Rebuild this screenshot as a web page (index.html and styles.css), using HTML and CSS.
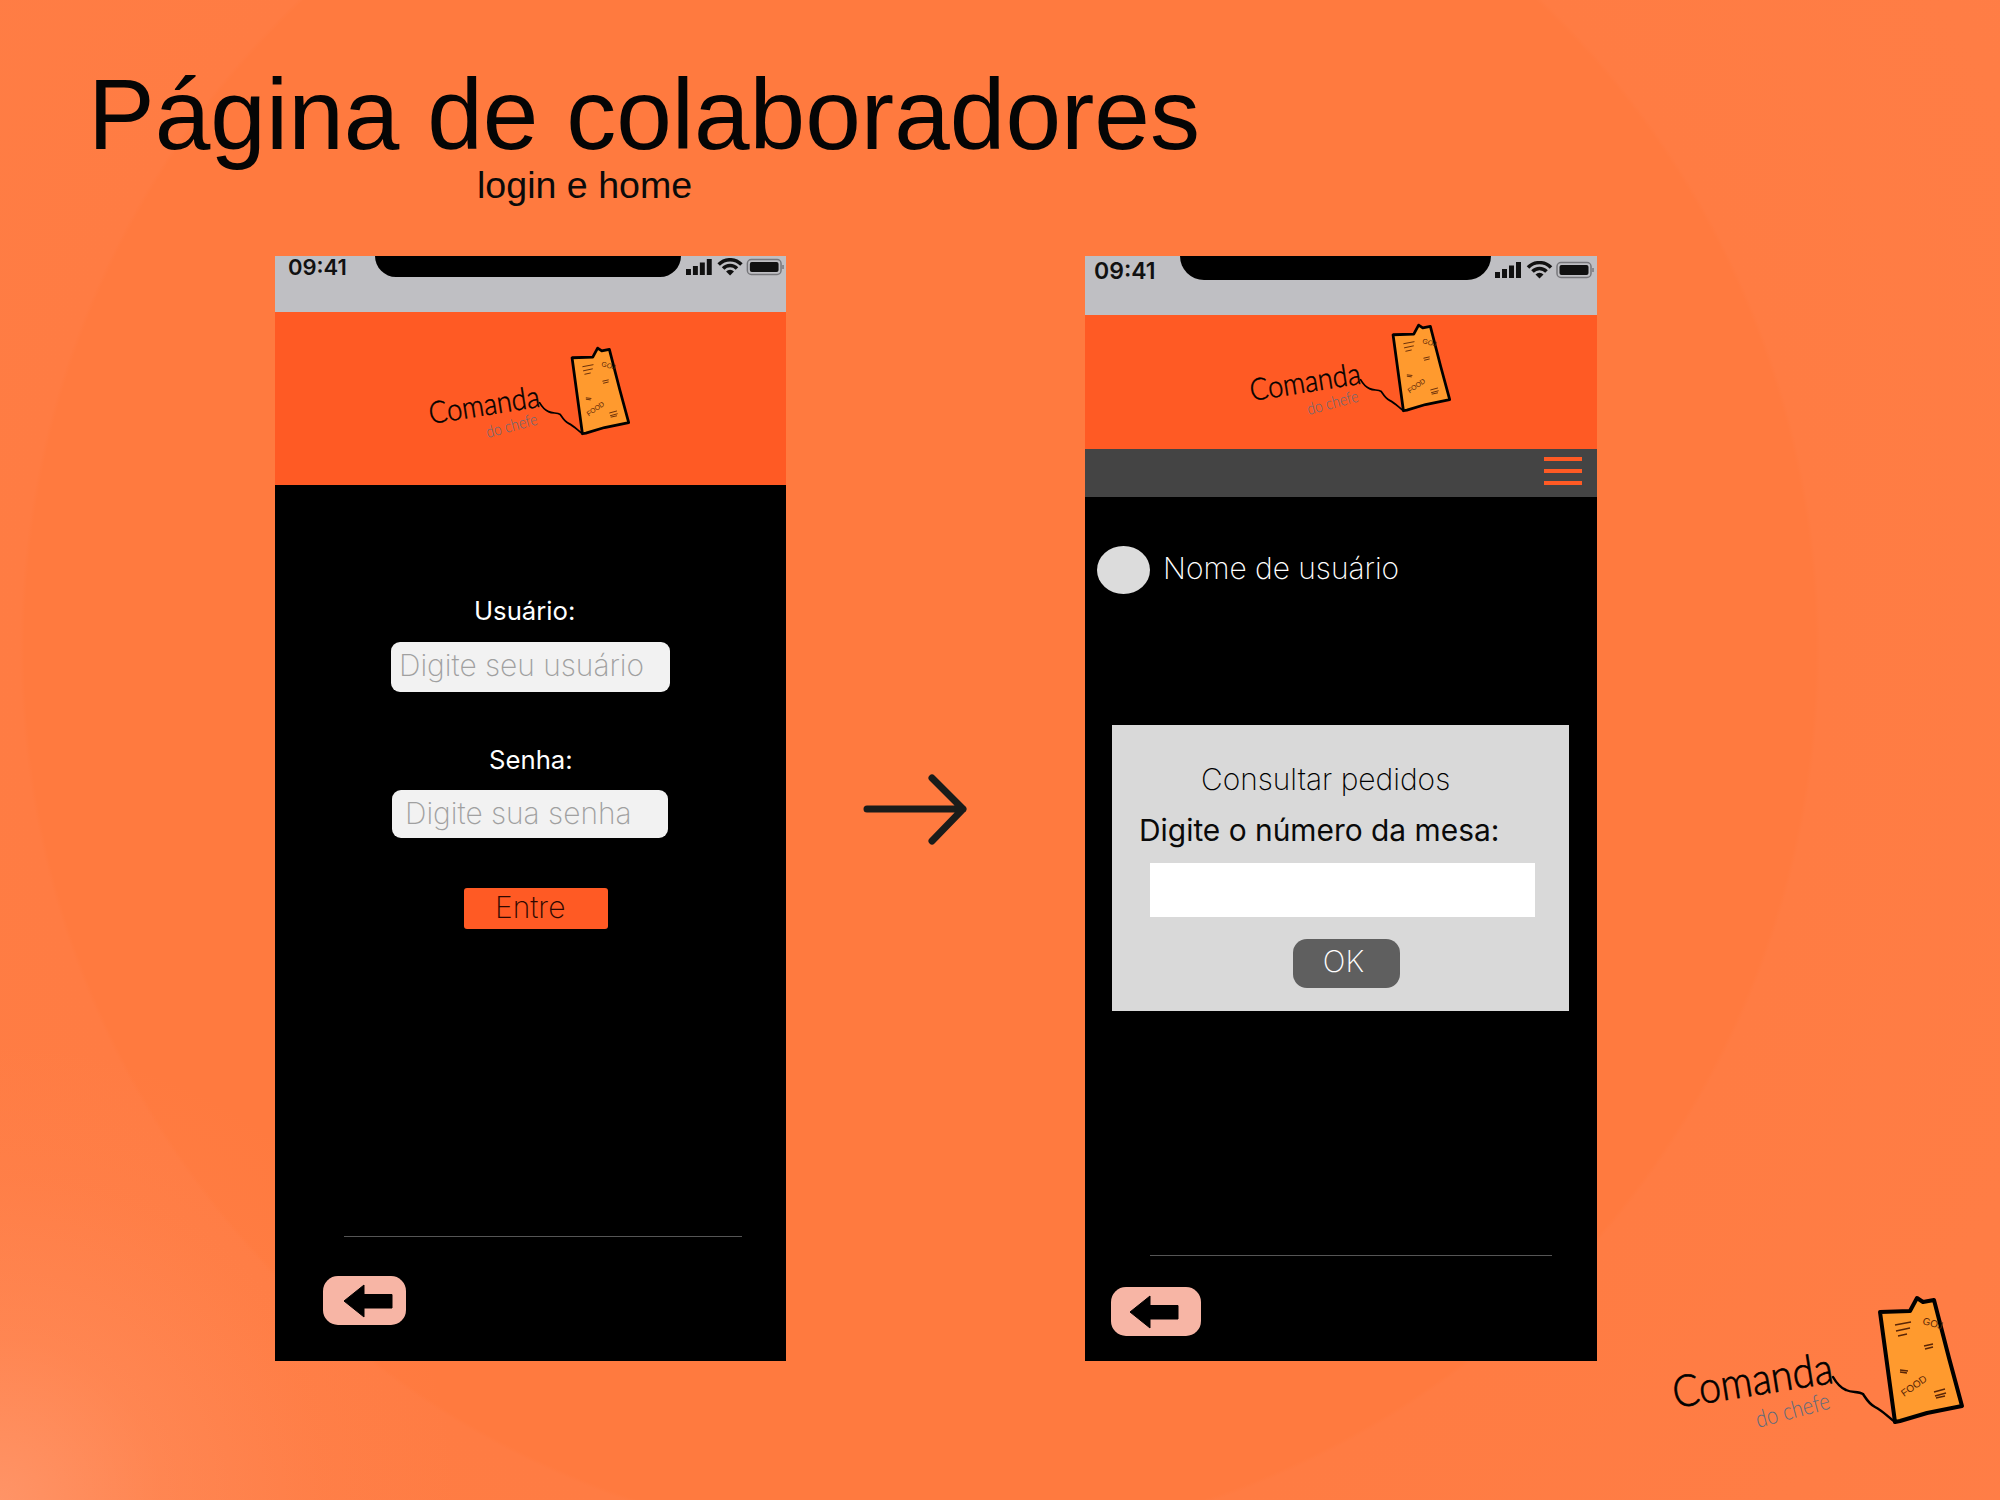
FILE: index.html
```html
<!DOCTYPE html>
<html lang="pt-BR">
<head>
<meta charset="utf-8">
<title>Página de colaboradores</title>
<link rel="stylesheet" href="styles.css">
</head>
<body>
<svg class="defs" aria-hidden="true">
  <symbol id="logo" viewBox="0 15 340 165">
    <path class="receipt" d="M220 32 L250 31 L257 18 L263 22 L274 20 L289 78 L302 126 L267 133 L240 141 L235 142 Z"/>
    <path class="string" d="M173 97 C177 104 181 108 186 110 C192 113 198 111 203 114 C207 120 209 124 215 127 C223 131 228 137 235 142"/>
    <path class="lines" d="M235 45 L251 42 M236 51 L250 48 M238 56 L247 54 M264 66 L273 64 M265 69 L273 67 M240 90 L248 91 M240 92 L247 93 M274 112 L285 109 M275 116 L286 113 M276 118 L285 116"/>
    <text class="receipt-note" transform="translate(262 44) rotate(15)">GOJ</text>
    <text class="receipt-note" transform="translate(244 117) rotate(-35)">FOOD</text>
    <text class="logo-name" transform="translate(15 128) rotate(-9)" textLength="162" lengthAdjust="spacingAndGlyphs">Comanda</text>
    <text class="logo-sub" transform="translate(98 148) rotate(-15)" textLength="76" lengthAdjust="spacingAndGlyphs">do chefe</text>
  </symbol>
  <symbol id="back" viewBox="0 0 50 34">
    <path d="M1 17 L21 1 L21 10.500 L49 10.500 L49 24 L21 24 L21 33 Z"/>
  </symbol>
</svg>

<main class="slide">
  <h1 class="title">Página de colaboradores</h1>
  <p class="subtitle">login e home</p>

  <section class="phone phone-login">
    <div class="status status-login">
      <span class="clock">09:41</span>
      <span class="notch"></span>
      <svg class="status-icons" viewBox="0 0 100 18"><path d="M0 11h5v6H0zM7 8h5v9H7zM14 4.500h5V17h-5zM21 1h5v16h-5z"/><path class="wifi" d="M33 6.500a16 16 0 0 1 23 0M37.500 10.500a9.500 9.500 0 0 1 14 0"/><path d="M44.500 17.500l-4-4a5.500 5.500 0 0 1 8 0z"/><rect class="batt-frame" x="62" y="1.500" width="34" height="15" rx="4"/><rect x="64.500" y="4" width="29" height="10" rx="2"/><path class="batt-tip" d="M98 7v4"/></svg>
    </div>
    <header class="brand brand-login"><svg class="logo"><use href="#logo"/></svg></header>
    <div class="body">
      <form class="login">
        <label class="field-label label-user">Usuário:</label>
        <div class="input input-user">Digite seu usuário</div>
        <label class="field-label label-pass">Senha:</label>
        <div class="input input-pass">Digite sua senha</div>
        <div class="enter">Entre</div>
      </form>
      <footer class="foot foot-login">
        <div class="rule"></div>
        <div class="back"><svg class="back-icon"><use href="#back"/></svg></div>
      </footer>
    </div>
  </section>

  <svg class="flow-arrow" viewBox="0 0 120 90"><path d="M10 44 H106 M75 13 L106 44 L75 76"/></svg>

  <section class="phone phone-home">
    <div class="status status-home">
      <span class="clock">09:41</span>
      <span class="notch"></span>
      <svg class="status-icons" viewBox="0 0 100 18"><path d="M0 11h5v6H0zM7 8h5v9H7zM14 4.500h5V17h-5zM21 1h5v16h-5z"/><path class="wifi" d="M33 6.500a16 16 0 0 1 23 0M37.500 10.500a9.500 9.500 0 0 1 14 0"/><path d="M44.500 17.500l-4-4a5.500 5.500 0 0 1 8 0z"/><rect class="batt-frame" x="62" y="1.500" width="34" height="15" rx="4"/><rect x="64.500" y="4" width="29" height="10" rx="2"/><path class="batt-tip" d="M98 7v4"/></svg>
    </div>
    <header class="brand brand-home"><svg class="logo"><use href="#logo"/></svg></header>
    <nav class="menu-bar"><div class="burger"><span></span><span></span><span></span></div></nav>
    <div class="body">
      <div class="user-row"><span class="avatar"></span><span class="user-name">Nome de usuário</span></div>
      <div class="card">
        <h2 class="card-title">Consultar pedidos</h2>
        <p class="card-label">Digite o número da mesa:</p>
        <div class="card-input"></div>
        <div class="ok">OK</div>
      </div>
      <footer class="foot foot-home">
        <div class="rule"></div>
        <div class="back"><svg class="back-icon"><use href="#back"/></svg></div>
      </footer>
    </div>
  </section>

  <svg class="corner-logo"><use href="#logo"/></svg>
</main>
</body>
</html>
```

FILE: styles.css
```css
* { box-sizing: border-box; }
html, body { margin: 0; padding: 0; }
body { width: 2000px; height: 1500px; overflow: hidden; font-family: "Inter", "Liberation Sans", sans-serif; }
.defs { position: absolute; left: 0; top: 0; width: 1px; height: 1px; overflow: hidden; }

.slide {
  position: relative;
  width: 2000px;
  height: 1500px;
  background: radial-gradient(circle 900px at 920px 650px, #ff7a3f 0, #ff7a3f 99.500%, #ff7c43 100%, #ff7e47 170%);
  overflow: hidden;
}
.slide::after {
  content: "";
  position: absolute;
  inset: 0;
  background: radial-gradient(circle 460px at 0 1500px, rgba(255, 170, 135, .5), rgba(255, 170, 135, .2) 35%, rgba(255, 170, 135, .05) 70%, rgba(255, 170, 135, 0));
  pointer-events: none;
}

.title {
  position: absolute;
  left: 88px;
  top: 64px;
  margin: 0;
  font: 400 100px/100px "Liberation Sans", Arial, sans-serif;
  color: #050505;
  white-space: nowrap;
}
.subtitle {
  position: absolute;
  left: 477px;
  top: 166px;
  margin: 0;
  font: 400 37.600px/38px "Liberation Sans", Arial, sans-serif;
  color: #0a0a0a;
  white-space: nowrap;
}

.phone { position: absolute; z-index: 1; display: flex; flex-direction: column; background: #000; }
.phone-login { left: 275px; top: 256px; width: 511px; height: 1105px; }
.phone-home { left: 1085px; top: 256px; width: 512px; height: 1105px; }

.status { display: flex; align-items: flex-start; background: #bfbfc3; flex: none; }
.status-login { height: 56px; padding-left: 13px; }
.status-home { height: 59px; padding-left: 9px; }
.clock { font: 600 22px/1 "Inter", "Liberation Sans", sans-serif; color: #111; width: 87px; flex: none; }
.status-home .clock { padding-top: 4px; width: 86px; font-size: 23px; }
.notch { height: 21px; width: 306px; background: #000; border-radius: 0 0 26px 26px; flex: none; }
.status-home .notch { width: 311px; height: 24px; border-radius: 0 0 28px 28px; }
.status-icons { width: 99px; height: 18px; margin: 2px 0 0 5px; fill: #111; flex: none; }
.status-home .status-icons { margin: 5px 0 0 4px; width: 100px; }
.wifi { fill: none; stroke: #111; stroke-width: 3.500; }
.batt-frame { fill: none; stroke: #77777b; stroke-width: 1.500; }
.batt-tip { fill: none; stroke: #77777b; stroke-width: 1.500; }

.brand { background: #ff5a24; flex: none; }
.brand-login { height: 173px; padding: 34px 0 0 145px; }
.brand-home { height: 134px; padding: 8px 0 0 156px; }
.logo { display: block; width: 235px; height: 114px; }
.receipt { fill: #ff9a2e; stroke: #000; stroke-width: 4; stroke-linejoin: round; }
.string { fill: none; stroke: #000; stroke-width: 2.500; stroke-linecap: round; }
.lines { fill: none; stroke: #5a2506; stroke-width: 1.300; }
.receipt-note { font: 400 10px "Liberation Sans", sans-serif; fill: #5a2506; }
.logo-name { font: 300 44px "Lato", "Inter", sans-serif; fill: #000; stroke: #000; stroke-width: .7; }
.logo-sub { font: 300 24px "Lato", "Inter", sans-serif; fill: #5c6b7c; }

.menu-bar { height: 48px; background: #444; flex: none; display: flex; justify-content: flex-end; padding: 8px 15px 0 0; }
.burger { width: 38px; height: 28px; display: flex; flex-direction: column; justify-content: space-between; }
.burger span { display: block; height: 4px; background: #ff5a24; }

.body { flex: 1; display: flex; flex-direction: column; min-height: 0; }

.login { display: flex; flex-direction: column; align-items: flex-start; padding-top: 110px; color: #fff; }
.field-label { font: 400 25.700px/32px "Inter", sans-serif; color: #fff; }
.label-user { margin-left: 199px; }
.label-pass { margin-left: 214px; margin-top: 52px; }
.input { display: flex; align-items: center; background: #f2f2f2; border-radius: 9px; font: 200 29.900px/1 "Inter", sans-serif; color: #a0a0a0; white-space: nowrap; }
.input-user { margin: 15px 0 0 116px; width: 279px; height: 50px; padding: 0 0 2px 8px; }
.input-pass { margin: 14px 0 0 117px; width: 276px; height: 48px; padding: 0 0 0 13px; }
.enter { margin: 50px 0 0 189px; width: 144px; height: 41px; background: #ff5a24; border-radius: 3px; font: 200 30px/38px "Inter", sans-serif; color: #2e0800; padding-left: 31px; }

.foot { margin-top: auto; flex: none; }
.foot-login { height: 125px; padding-left: 69px; }
.foot-home { height: 106px; padding-left: 65px; }
.rule { height: 1px; background: #555; width: 398px; }
.foot-home .rule { width: 402px; }
.back { background: #f7b5a5; border-radius: 15px; display: flex; align-items: center; justify-content: center; }
.foot-login .back { width: 83px; height: 49px; margin: 39px 0 0 -21px; padding-left: 6px; }
.foot-home .back { width: 90px; height: 49px; margin: 31px 0 0 -39px; padding-right: 4px; }
.back-icon { width: 50px; height: 34px; fill: #000; stroke: #000; stroke-width: 1; stroke-linejoin: round; flex: none; }

.user-row { display: flex; align-items: center; padding: 49px 0 0 12px; flex: none; }
.avatar { width: 53px; height: 48px; border-radius: 50%; background: #dcdcdc; flex: none; }
.user-name { font: 200 29.900px/36px "Inter", sans-serif; color: #fff; margin: -5px 0 0 13px; white-space: nowrap; }
.card { margin: 131px 0 0 27px; width: 457px; height: 286px; background: #d9d9d9; display: flex; flex-direction: column; align-items: flex-start; flex: none; }
.card-title { margin: 36px 0 0 89px; font: 200 29.900px/36px "Inter", sans-serif; color: #000; white-space: nowrap; }
.card-label { margin: 15px 0 0 27px; font: 400 29.900px/36px "Inter", sans-serif; color: #0a0a0a; white-space: nowrap; }
.card-input { margin: 15px 0 0 38px; width: 385px; height: 54px; background: #fff; flex: none; }
.ok { margin: 22px 0 0 181px; width: 107px; height: 49px; background: #5f5f5f; border-radius: 14px; font: 200 30px/44px "Inter", sans-serif; color: #fff; text-align: center; padding-right: 6px; flex: none; }

.flow-arrow { position: absolute; left: 857px; top: 765px; width: 120px; height: 90px; fill: none; stroke: #1a1c1a; stroke-width: 7; stroke-linecap: round; stroke-linejoin: round; }
.corner-logo { position: absolute; z-index: 1; left: 1660px; top: 1295px; width: 340px; height: 165px; }
```
